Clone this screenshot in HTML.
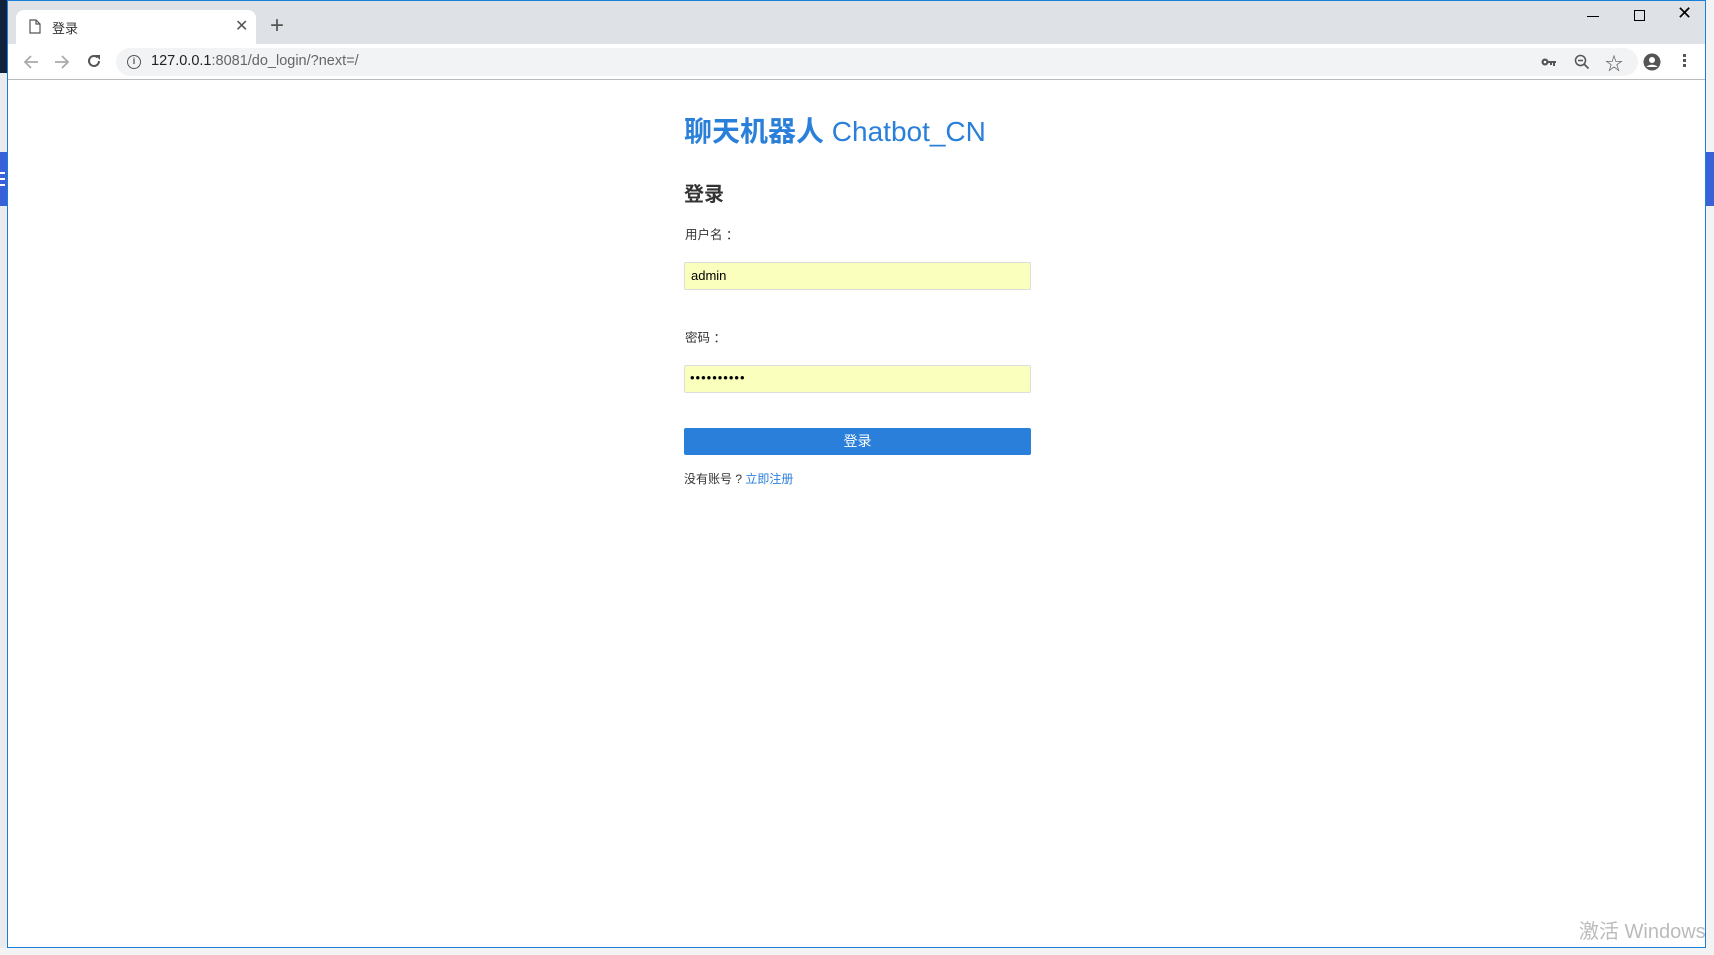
<!DOCTYPE html>
<html><head><meta charset="utf-8"><style>
*{margin:0;padding:0;box-sizing:border-box}
body{width:1714px;height:955px;overflow:hidden;background:#f0f0f0;font-family:"Liberation Sans","Noto Sans CJK SC",sans-serif;position:relative}
.abs{position:absolute}
</style></head><body>
<div class="abs" style="left:0;top:0;width:7px;height:73px;background:#10223c"></div>
<div class="abs" style="left:0;top:73px;width:7px;height:882px;background:#e9ebee"></div>
<div class="abs" style="left:0;top:152px;width:7px;height:54px;background:#3a62d8"></div>
<div class="abs" style="left:0;top:172px;width:5px;height:2px;background:#fff"></div>
<div class="abs" style="left:0;top:178px;width:5px;height:2px;background:#fff"></div>
<div class="abs" style="left:0;top:184px;width:5px;height:2px;background:#fff"></div>
<div class="abs" style="left:1706px;top:0;width:8px;height:955px;background:#f3f3f3"></div>
<div class="abs" style="left:1706px;top:152px;width:8px;height:54px;background:#3a62d8"></div>
<div class="abs" style="left:0;top:948px;width:1714px;height:7px;background:#f3f3f3"></div>

<div class="abs" style="left:7px;top:0;width:1699px;height:948px;border:1px solid #1a7fd8;background:#fff;overflow:hidden">
  <div class="abs" style="left:0;top:0;width:1699px;height:43px;background:#dee1e6"></div>
  <div class="abs" style="left:8px;top:9px;width:240px;height:34px;background:#fff;border-radius:8px 8px 0 0"></div>
  <svg class="abs" style="left:21px;top:18px" width="12" height="15" viewBox="0 0 12 15"><path d="M1 1h6l4 4v9H1z M7 1v4h4" fill="none" stroke="#555" stroke-width="1.2"/></svg>
  <div class="abs" style="left:44px;top:17px;font-size:13px;color:#333">登录</div>
  <div class="abs" style="left:227px;top:15px;font-size:16px;color:#555">✕</div>
  <div class="abs" style="left:262px;top:11px;font-size:24px;color:#555">+</div>
  <div class="abs" style="left:1579px;top:15px;width:12px;height:1px;background:#000"></div>
  <div class="abs" style="left:1626px;top:9px;width:11px;height:11px;border:1px solid #000"></div>
  <div class="abs" style="left:1669px;top:2px;font-size:18px;color:#000">✕</div>
  <div class="abs" style="left:0;top:43px;width:1699px;height:36px;background:#fff;border-bottom:1px solid #bbb"></div>
  <svg class="abs" style="left:15px;top:53px" width="16" height="16" viewBox="0 0 16 16"><path d="M15 8H2M8 2L2 8l6 6" fill="none" stroke="#aaa" stroke-width="1.8"/></svg>
  <svg class="abs" style="left:46px;top:53px" width="16" height="16" viewBox="0 0 16 16"><path d="M1 8h13M8 2l6 6-6 6" fill="none" stroke="#aaa" stroke-width="1.8"/></svg>
  <svg class="abs" style="left:78px;top:52px" width="16" height="16" viewBox="0 0 16 16"><path d="M13 8a5 5 0 1 1-1.5-3.6" fill="none" stroke="#555" stroke-width="2"/><path d="M9 2h5v5z" fill="#555"/></svg>
  <div class="abs" style="left:108px;top:47px;width:1522px;height:28px;background:#f1f3f4;border-radius:14px"></div>
  <div class="abs" style="left:119px;top:54px;width:14px;height:14px;border:1.5px solid #555;border-radius:50%;font-size:9px;text-align:center;line-height:11px;color:#555;font-weight:bold">i</div>
  <div class="abs" style="left:143px;top:52px;font-size:14.5px;color:#222">127.0.0.1<span style="color:#666">:8081/do_login/?next=/</span></div>
  <svg class="abs" style="left:1533px;top:56px" width="16" height="10" viewBox="0 0 16 10"><circle cx="4" cy="5" r="3.5" fill="#555"/><circle cx="4" cy="5" r="1.3" fill="#fff"/><path d="M7 4h8v2h-1v3h-2V6h-1v2H9V6H7z" fill="#555"/></svg>
  <svg class="abs" style="left:1566px;top:53px" width="16" height="16" viewBox="0 0 16 16"><circle cx="6.5" cy="6.5" r="5" fill="none" stroke="#555" stroke-width="1.5"/><path d="M4 6.5h5M10 10l4.5 4.5" stroke="#555" stroke-width="1.6"/></svg>
  <div class="abs" style="left:1597px;top:49px;font-size:18px;color:#555">☆</div>
  <svg class="abs" style="left:1635px;top:52px" width="18" height="18" viewBox="0 0 18 18"><circle cx="9" cy="9" r="8.5" fill="#555"/><circle cx="9" cy="7" r="3" fill="#fff"/><path d="M3.5 14c2-3 9-3 11 0" fill="#fff"/></svg>
  <div class="abs" style="left:1675px;top:53px;width:3px;height:3px;background:#555;box-shadow:0 5px #555,0 10px #555"></div>

  <div class="abs" style="left:676px;top:109px;font-size:28px;color:#2a7fd9;white-space:nowrap"><b>聊天机器人</b> Chatbot_CN</div>
  <div class="abs" style="left:676px;top:177px;font-size:20px;font-weight:bold;color:#333">登录</div>
  <div class="abs" style="left:677px;top:223px;font-size:12.5px;color:#333">用户名 ：</div>
  <div class="abs" style="left:676px;top:261px;width:347px;height:28px;background:#faffbd;border:1px solid #ddd;border-radius:2px;font-size:13px;padding:5px 6px;color:#000">admin</div>
  <div class="abs" style="left:677px;top:326px;font-size:12.5px;color:#333">密码 ：</div>
  <div class="abs" style="left:676px;top:364px;width:347px;height:28px;background:#faffbd;border:1px solid #ddd;border-radius:2px;font-size:13px;padding:4px 5px;color:#000;letter-spacing:1px">••••••••••</div>
  <div class="abs" style="left:676px;top:427px;width:347px;height:27px;background:#2a7fdb;border-radius:2px;color:#fff;font-size:14px;text-align:center;line-height:27px">登录</div>
  <div class="abs" style="left:676px;top:469px;font-size:12px;color:#333">没有账号 ? <span style="color:#2a7fdb">立即注册</span></div>
</div>
<div class="abs" style="left:1579px;top:915px;font-size:20px;color:#bbb;white-space:nowrap">激活 Windows</div>
</body></html>
